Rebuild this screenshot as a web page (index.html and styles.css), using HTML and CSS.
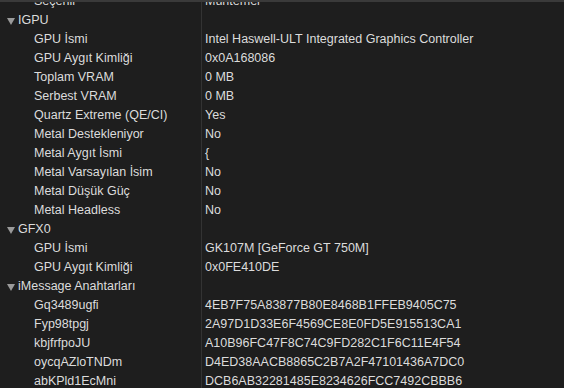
FILE: index.html
```html
<!DOCTYPE html>
<html lang="tr">
<head>
    <meta charset="UTF-8">
    <title>Sistem Bilgisi</title>
    <link rel="stylesheet" href="styles.css">
</head>
<body>
    <div class="table">
        <div class="row"><div class="key child">Seçenli</div><div class="val">Mühtemel</div></div>

        <div class="row"><div class="key group"><span class="tri"></span>IGPU</div><div class="val"></div></div>
        <div class="row"><div class="key child">GPU İsmi</div><div class="val">Intel Haswell-ULT Integrated Graphics Controller</div></div>
        <div class="row"><div class="key child">GPU Aygıt Kimliği</div><div class="val">0x0A168086</div></div>
        <div class="row"><div class="key child">Toplam VRAM</div><div class="val">0 MB</div></div>
        <div class="row"><div class="key child">Serbest VRAM</div><div class="val">0 MB</div></div>
        <div class="row"><div class="key child">Quartz Extreme (QE/CI)</div><div class="val">Yes</div></div>
        <div class="row"><div class="key child">Metal Destekleniyor</div><div class="val">No</div></div>
        <div class="row"><div class="key child">Metal Aygıt İsmi</div><div class="val">{</div></div>
        <div class="row"><div class="key child">Metal Varsayılan İsim</div><div class="val">No</div></div>
        <div class="row"><div class="key child">Metal Düşük Güç</div><div class="val">No</div></div>
        <div class="row"><div class="key child">Metal Headless</div><div class="val">No</div></div>

        <div class="row"><div class="key group"><span class="tri"></span>GFX0</div><div class="val"></div></div>
        <div class="row"><div class="key child">GPU İsmi</div><div class="val">GK107M [GeForce GT 750M]</div></div>
        <div class="row"><div class="key child">GPU Aygıt Kimliği</div><div class="val">0x0FE410DE</div></div>

        <div class="row"><div class="key group"><span class="tri"></span>iMessage Anahtarları</div><div class="val"></div></div>
        <div class="row"><div class="key child">Gq3489ugfi</div><div class="val">4EB7F75A83877B80E8468B1FFEB9405C75</div></div>
        <div class="row"><div class="key child">Fyp98tpgj</div><div class="val">2A97D1D33E6F4569CE8E0FD5E915513CA1</div></div>
        <div class="row"><div class="key child">kbjfrfpoJU</div><div class="val">A10B96FC47F8C74C9FD282C1F6C11E4F54</div></div>
        <div class="row"><div class="key child">oycqAZloTNDm</div><div class="val">D4ED38AACB8865C2B7A2F47101436A7DC0</div></div>
        <div class="row"><div class="key child">abKPld1EcMni</div><div class="val">DCB6AB32281485E8234626FCC7492CBBB6</div></div>
    </div>
</body>
</html>
```

FILE: styles.css
```css
html, body {
    margin: 0;
    padding: 0;
    height: 100%;
    overflow: hidden;
}

body {
    background: #1e1e1e;
    color: #dcdcdc;
    font-family: "Liberation Sans", Arial, sans-serif;
    font-size: 12.5px;
    border-top: 2px solid #3a3a3a;
    box-sizing: border-box;
}

.table {
    margin-top: -10px;
    background: linear-gradient(#333, #333) 201px 0 / 1px 100% no-repeat;
}

.row {
    display: grid;
    grid-template-columns: 201px 1fr;
    height: 19px;
    line-height: 19px;
    white-space: nowrap;
}

.key {
    overflow: hidden;
}

.child {
    padding-left: 34px;
}

.group {
    display: flex;
    align-items: center;
    padding-left: 7px;
}

.tri {
    width: 0;
    height: 0;
    border-left: 4px solid transparent;
    border-right: 4px solid transparent;
    border-top: 7px solid #9a9a9a;
    margin-right: 3px;
    margin-top: 1px;
}

.val {
    padding-left: 4px;
}
```
